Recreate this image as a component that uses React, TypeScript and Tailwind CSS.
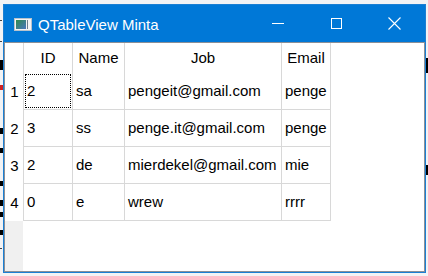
import { useState } from "react";

type Row = { id: string; name: string; job: string; email: string };

const rows: Row[] = [
  { id: "2", name: "sa", job: "pengeit@gmail.com", email: "penge" },
  { id: "3", name: "ss", job: "penge.it@gmail.com", email: "penge" },
  { id: "2", name: "de", job: "mierdekel@gmail.com", email: "mie" },
  { id: "0", name: "e", job: "wrew", email: "rrrr" },
];

const font = { fontFamily: '"Liberation Sans", Arial, sans-serif' };

function AppIcon() {
  return (
    <svg width="18" height="13" viewBox="0 0 18 13" className="shrink-0">
      <defs>
        <linearGradient id="ico" x1="0" y1="0" x2="1" y2="1">
          <stop offset="0" stopColor="#2f8a4e" />
          <stop offset="1" stopColor="#4a78c0" />
        </linearGradient>
      </defs>
      <rect x="0.5" y="0.5" width="17" height="12" fill="#f4f4f4" stroke="#b9c3cc" />
      <rect x="2" y="2" width="10" height="9" fill="url(#ico)" />
      <rect x="13" y="2" width="1" height="9" fill="#6e7f8e" />
    </svg>
  );
}

function TitleBar() {
  return (
    <div className="h-[37px] bg-[#0078d7] flex items-center text-white shrink-0">
      <div className="ml-[10px] mt-[1px]">
        <AppIcon />
      </div>
      <span className="ml-[6px] text-[15px] leading-none mt-[1px]">QTableView Minta</span>
      <div className="ml-auto mr-[2px] flex items-center h-full">
        <div className="w-[58px] h-full flex items-center justify-center">
          <div className="w-[12px] h-[1px] bg-white" />
        </div>
        <div className="w-[58px] h-full flex items-center justify-center">
          <div className="w-[11px] h-[11px] border border-white" />
        </div>
        <div className="w-[58px] h-full flex items-center justify-center">
          <svg width="13" height="13" viewBox="0 0 13 13">
            <path d="M0.5 0.5 L12.5 12.5 M12.5 0.5 L0.5 12.5" stroke="white" strokeWidth="1.1" />
          </svg>
        </div>
      </div>
    </div>
  );
}

function Table() {
  const [focus] = useState(0);
  const cols = ["w-[49px]", "w-[52px]", "w-[157px]", "w-[49px]"];
  return (
    <div className="flex-1 border border-[#8a8f97] bg-white flex flex-col text-[15px] text-black overflow-hidden">
      <div className="flex h-[30px] shrink-0">
        <div className="w-[19px] border-r border-[#d8d8d8]" />
        {["ID", "Name", "Job", "Email"].map((h, i) => (
          <div key={h} className={`${cols[i]} border-r border-[#d8d8d8] flex items-center justify-center pt-[1px]`}>
            {h}
          </div>
        ))}
      </div>
      {rows.map((r, ri) => (
        <div key={ri} className="flex h-[37px] shrink-0">
          <div className="w-[19px] border-r border-[#d8d8d8] flex items-center justify-center pt-[1px] pl-[1px]">
            {ri + 1}
          </div>
          {[r.id, r.name, r.job, r.email].map((v, ci) => (
            <div key={ci} className={`${cols[ci]} border-r border-b border-[#d8d8d8] flex`}>
              {ri === focus && ci === 0 ? (
                <div className="flex-1 m-[1px] border border-dotted border-black flex items-center pl-[1px] pt-[1px]">
                  {v}
                </div>
              ) : (
                <div className="flex-1 flex items-center pl-[3px] pt-[1px] overflow-hidden whitespace-nowrap">
                  {v}
                </div>
              )}
            </div>
          ))}
        </div>
      ))}
      <div className="flex-1 flex">
        <div className="w-[18px] bg-[#f0f0f0]" />
      </div>
    </div>
  );
}

export default function App() {
  return (
    <div className="relative w-[428px] h-[276px] bg-[#f2f3f5] overflow-hidden" style={font}>
      {/* bits of the window underneath */}
      <div className="absolute left-0 top-[20px] w-[2px] h-[1px] bg-[#444]" />
      <div className="absolute left-0 top-[41px] w-[2px] h-[1px] bg-[#444]" />
      <div className="absolute left-0 top-[60px] w-[3px] h-[10px] bg-black" />
      <div className="absolute left-0 top-[85px] w-[3px] h-[5px] bg-[#d02020]" />
      <div className="absolute left-0 top-[128px] w-[3px] h-[6px] bg-black" />
      <div className="absolute left-0 top-[148px] w-[3px] h-[5px] bg-black" />
      <div className="absolute left-0 top-[181px] w-[3px] h-[5px] bg-black" />
      <div className="absolute left-0 top-[200px] w-[3px] h-[6px] bg-black" />
      <div className="absolute left-0 top-[212px] w-[3px] h-[5px] bg-black" />
      <div className="absolute left-0 top-[230px] w-[3px] h-[5px] bg-black" />
      <div className="absolute left-0 top-[248px] w-[2px] h-[1px] bg-[#444]" />
      <div className="absolute left-[426px] top-[58px] w-[2px] h-[15px] bg-black" />
      <div className="absolute left-[426px] top-[165px] w-[2px] h-[10px] bg-black" />

      <div className="relative ml-[3px] pt-[4px]">
        <div className="w-[423px] h-[269px] border border-[#1a7fd4] flex flex-col">
          <TitleBar />
          <Table />
        </div>
      </div>
    </div>
  );
}
